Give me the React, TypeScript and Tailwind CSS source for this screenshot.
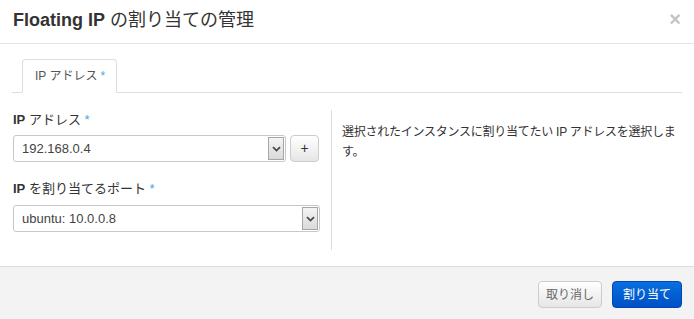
import React from "react";

function Chevron() {
  return (
    <svg width="9" height="6" viewBox="0 0 9 6" fill="none">
      <path d="M1 1.2 L4.5 4.6 L8 1.2" stroke="#4a4a4a" strokeWidth="1.8" />
    </svg>
  );
}

function SelectBox({ value, className }: { value: string; className: string }) {
  return (
    <div className={`flex h-[27px] items-stretch rounded-[3px] border border-[#c8c8c8] bg-white ${className}`}>
      <div className="flex flex-1 items-center pl-[8px] text-[13px] text-[#444]">{value}</div>
      <div className="my-[1px] mr-[1px] flex w-[16px] items-center justify-center border border-[#a6a6a6] bg-gradient-to-b from-[#f4f4f4] to-[#dadada]">
        <Chevron />
      </div>
    </div>
  );
}

function Label({ children }: { children: React.ReactNode }) {
  return (
    <div className="h-[18px] text-[13px] leading-[18px] text-[#333]">
      {children} <span className="text-[#4aa6e0]">*</span>
    </div>
  );
}

export default function App() {
  return (
    <div className="flex h-[319px] w-[694px] flex-col overflow-hidden bg-white font-['Liberation_Sans','Noto_Sans_CJK_JP',sans-serif] text-[#333]">
      <div className="flex h-[44px] shrink-0 items-center justify-between border-b border-[#e5e5e5] pl-[13px] pr-[13px]">
        <div className="pb-[2px] text-[18px] text-[#333]">
          <span className="font-bold">Floating IP</span> の割り当ての管理
        </div>
        <div className="pb-[6px] text-[20px] font-bold leading-none text-[#c4c4c4]">×</div>
      </div>

      <div className="flex-1 px-[12px] pt-[15px]">
        <div className="flex border-b border-[#dddddd] pl-[10px]">
          <div className="-mb-px flex h-[34px] w-[95px] items-center rounded-t-[4px] border border-[#dddddd] border-b-white bg-white pl-[12px] text-[12px] text-[#555]">
            IP アドレス <span className="ml-[3px] text-[#4aa6e0]">*</span>
          </div>
        </div>

        <div className="mt-[17px] flex">
          <div className="ml-[1px] w-[307px] pt-[1px]">
            <Label>
              <span className="font-bold">IP</span> アドレス
            </Label>
            <div className="mt-[6px] flex gap-[4px]">
              <SelectBox value="192.168.0.4" className="w-[273px]" />
              <div className="flex h-[27px] w-[29px] items-center justify-center rounded-[4px] border border-[#cccccc] bg-gradient-to-b from-white to-[#e6e6e6] text-[14px] text-[#333]">
                +
              </div>
            </div>
            <div className="mt-[18px]">
              <Label>
                <span className="font-bold">IP</span> を割り当てるポート
              </Label>
            </div>
            <div className="mt-[7px]">
              <SelectBox value="ubuntu: 10.0.0.8" className="w-[307px]" />
            </div>
          </div>
          <div className="ml-[11px] h-[140px] flex-1 border-l border-[#dddddd] pl-[10px] pt-[12px] text-[12px] leading-[20px] tracking-[-0.25px] text-[#333]">
            選択されたインスタンスに割り当てたい IP アドレスを選択します。
          </div>
        </div>
      </div>

      <div className="flex h-[53px] shrink-0 items-start justify-end gap-[10px] border-t border-[#dddddd] bg-[#f3f3f3] pr-[12px] pt-[14px]">
        <div className="flex h-[27px] w-[64px] items-center justify-center rounded-[4px] border border-[#cccccc] bg-gradient-to-b from-white to-[#e6e6e6] text-[12px] text-[#666]">
          取り消し
        </div>
        <div className="flex h-[27px] w-[70px] items-center justify-center rounded-[4px] border border-[#0047b3] bg-gradient-to-b from-[#0a6fe0] to-[#0050c4] text-[12px] text-white">
          割り当て
        </div>
      </div>
    </div>
  );
}
